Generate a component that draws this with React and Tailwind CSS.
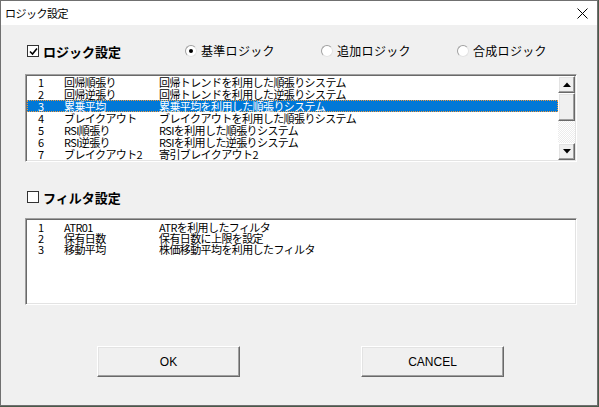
import { useState } from "react"

const logics = [
    { no: '1', name: '回帰順張り', desc: '回帰トレンドを利用した順張りシステム' },
    { no: '2', name: '回帰逆張り', desc: '回帰トレンドを利用した逆張りシステム' },
    { no: '3', name: '累乗平均', desc: '累乗平均を利用した順張りシステム' },
    { no: '4', name: 'ブレイクアウト', desc: 'ブレイクアウトを利用した順張りシステム' },
    { no: '5', name: 'RSI順張り', desc: 'RSIを利用した順張りシステム' },
    { no: '6', name: 'RSI逆張り', desc: 'RSIを利用した逆張りシステム' },
    { no: '7', name: 'ブレイクアウト2', desc: '寄引ブレイクアウト2' },
]

const filters = [
    { no: '1', name: 'ATR01', desc: 'ATRを利用したフィルタ' },
    { no: '2', name: '保有日数', desc: '保有日数に上限を設定' },
    { no: '3', name: '移動平均', desc: '株価移動平均を利用したフィルタ' },
]

const jp = "font-['Noto_Sans_CJK_JP',sans-serif]"
const raised = 'bg-[#f0f0f0] border border-t-white border-l-white border-b-[#696969] border-r-[#696969] shadow-[inset_-1px_-1px_0_#a0a0a0,inset_1px_1px_0_#e3e3e3]'
const sunken = 'bg-white border border-t-[#a0a0a0] border-l-[#a0a0a0] border-b-white border-r-white shadow-[inset_1px_1px_0_#696969,inset_-1px_-1px_0_#e3e3e3]'

function CheckBox({ checked, label }) {
    return (
        <div className="flex items-center h-[16px] w-[160px]">
            <div className="w-[12px] h-[12px] bg-white border border-[#333] flex items-center justify-center ml-[2px]">
                {checked && (
                    <svg width="9" height="9" viewBox="0 0 9 9">
                        <path d="M1 4.5 L3.5 7 L8 1.5" stroke="#000" strokeWidth="1.6" fill="none" />
                    </svg>
                )}
            </div>
            <span className={`${jp} ml-[4px] text-[13px] font-bold text-black leading-none`}>{label}</span>
        </div>
    )
}

function Radio({ checked, label }) {
    return (
        <div className="flex items-center h-[16px] w-[136px]">
            <div className="w-[12px] h-[12px] rounded-full bg-white border border-t-[#a0a0a0] border-l-[#a0a0a0] border-b-[#e3e3e3] border-r-[#e3e3e3] flex items-center justify-center">
                {checked && <div className="w-[4px] h-[4px] rounded-full bg-black" />}
            </div>
            <span className={`${jp} ml-[4px] text-[12px] tracking-[0.3px] text-black leading-none`}>{label}</span>
        </div>
    )
}

function Row({ item, selected, h }) {
    return (
        <div className={`flex items-center ${h} text-[11px] tracking-[-0.6px] ${jp} ${selected ? 'bg-[#0078d7] text-white border border-dotted border-[#f29a3c]' : 'text-black border border-transparent'}`}>
            <span className="w-[36px] pl-[10px]">{item.no}</span>
            <span className="w-[95px] whitespace-nowrap">{item.name}</span>
            <span className="whitespace-nowrap">{item.desc}</span>
        </div>
    )
}

function Arrow({ up }) {
    return (
        <svg width="8" height="5" viewBox="0 0 8 5">
            <path d={up ? 'M0 5 L4 0.5 L8 5 Z' : 'M0 0 L4 4.5 L8 0 Z'} fill="#000" />
        </svg>
    )
}

export default function App() {
    const [selected, setSelected] = useState(2)

    return (
        <div className="w-[599px] h-[407px] bg-[#4a5a4a] overflow-hidden">
            <div className="w-[598px] h-[406px] bg-[#f0f0f0] border border-[#707070] flex flex-col">
                <div className="h-[24px] bg-white flex items-center justify-between pl-[4px] pr-[9px]">
                    <span className={`${jp} text-[11px] tracking-[-0.5px] text-black`}>ロジック設定</span>
                    <svg width="11" height="11" viewBox="0 0 11 11">
                        <path d="M0.5 0.5 L10.5 10.5 M10.5 0.5 L0.5 10.5" stroke="#000" strokeWidth="1" />
                    </svg>
                </div>

                <div className="flex flex-col pl-[24px]">
                    <div className="flex mt-[18px]">
                        <CheckBox checked label="ロジック設定" />
                        <Radio checked label="基準ロジック" />
                        <Radio label="追加ロジック" />
                        <Radio label="合成ロジック" />
                    </div>

                    <div className={`mt-[15px] w-[552px] h-[88px] flex ${sunken} p-[1px]`}>
                        <div className="flex-1 flex flex-col overflow-hidden">
                            {logics.map((l, i) => (
                                <div key={l.no} onClick={() => setSelected(i)}>
                                    <Row item={l} selected={i === selected} h="h-[12px] leading-[10px]" />
                                </div>
                            ))}
                        </div>
                        <div className="w-[17px] flex flex-col">
                            <div className={`h-[17px] flex items-center justify-center ${raised}`}><Arrow up /></div>
                            <div className={`h-[28px] ${raised}`} />
                            <div className="flex-1 bg-[repeating-conic-gradient(#ffffff_0%_25%,#ececec_0%_50%)] bg-size-[2px_2px]" />
                            <div className={`h-[17px] flex items-center justify-center ${raised}`}><Arrow /></div>
                        </div>
                    </div>

                    <div className="flex mt-[27px]">
                        <CheckBox label="フィルタ設定" />
                    </div>

                    <div className={`mt-[13px] w-[552px] h-[87px] flex flex-col ${sunken} pt-[2px] px-[1px]`}>
                        {filters.map(f => (
                            <Row key={f.no} item={f} h="h-[11px] leading-[10px]" />
                        ))}
                    </div>

                    <div className="flex mt-[41px] pl-[72px] gap-[121px]">
                        <button type="button" className={`w-[143px] h-[31px] ${raised} font-['Liberation_Sans',sans-serif] text-[12px] text-black`}>OK</button>
                        <button type="button" className={`w-[143px] h-[31px] ${raised} font-['Liberation_Sans',sans-serif] text-[12px] text-black`}>CANCEL</button>
                    </div>
                </div>
            </div>
        </div>
    )
}
